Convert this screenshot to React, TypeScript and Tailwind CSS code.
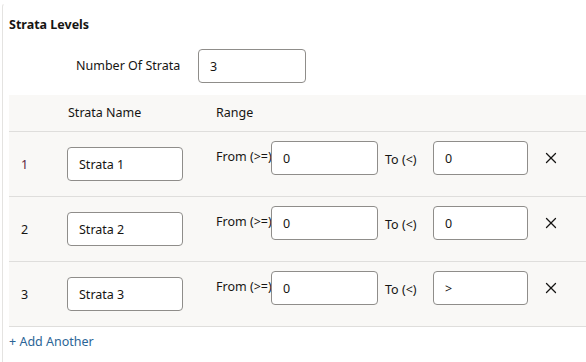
import { X } from "lucide-react";

const rows = [
  { n: "1", name: "Strata 1", from: "0", to: "0", first: true },
  { n: "2", name: "Strata 2", from: "0", to: "0" },
  { n: "3", name: "Strata 3", from: "0", to: ">" },
];

function Field({ value, className }: { value: string; className: string }) {
  return (
    <input
      readOnly
      value={value}
      className={`h-[34px] rounded-[4px] border border-[#8f8d8a] bg-white px-[11px] text-[12.5px] text-[#161513] outline-none ${className}`}
    />
  );
}

export default function App() {
  return (
    <div
      className="h-[362px] w-[586px] overflow-hidden bg-white text-[#161513]"
      style={{ fontFamily: '"Noto Sans", "Open Sans", sans-serif' }}
    >
      <div className="ml-[2px] mt-[3px] h-full rounded-tl-[4px] border-l border-t border-[#e4e3e1] border-t-transparent pl-[6px]">
        <h2 className="pt-[12px] text-[12.5px] font-bold leading-[18px]">Strata Levels</h2>

        <div className="mt-[15px] flex items-center">
          <span className="ml-[67px] w-[122px] text-[12.5px]">Number Of Strata</span>
          <Field value="3" className="w-[108px]" />
        </div>

        <div className="mt-[12px] bg-[#f9f8f6]">
          <div className="flex h-[37px] items-center border-b border-[#dfdedc] text-[12.5px]">
            <span className="ml-[59px] w-[148px]">Strata Name</span>
            <span>Range</span>
          </div>

          {rows.map((r) => (
            <div key={r.n} className="flex h-[65px] border-b border-[#dfdedc]">
              <span
                className={`ml-[12px] w-[46px] self-center pt-[2px] text-[12.5px] ${
                  r.first ? "text-[#5e1f3f]" : "text-[#161513]"
                }`}
              >
                {r.n}
              </span>
              <div className="flex w-[149px] items-center">
                <Field value={r.name} className="w-[116px]" />
              </div>
              <div className="flex items-start pt-[9px]">
                <span className="mt-[7px] w-[55px] whitespace-nowrap text-[12.5px]">From (&gt;=)</span>
                <Field value={r.from} className="w-[107px]" />
                <span className="ml-[7px] mt-[10px] w-[48px] text-[12.5px]">To (&lt;)</span>
                <Field value={r.to} className="w-[95px]" />
                <X size={18} strokeWidth={1.7} className="ml-[14px] mt-[8px] text-[#161513]" />
              </div>
            </div>
          ))}
        </div>

        <div className="mt-[6px] text-[12.5px] text-[#2b6596]">+ Add Another</div>
      </div>
    </div>
  );
}
